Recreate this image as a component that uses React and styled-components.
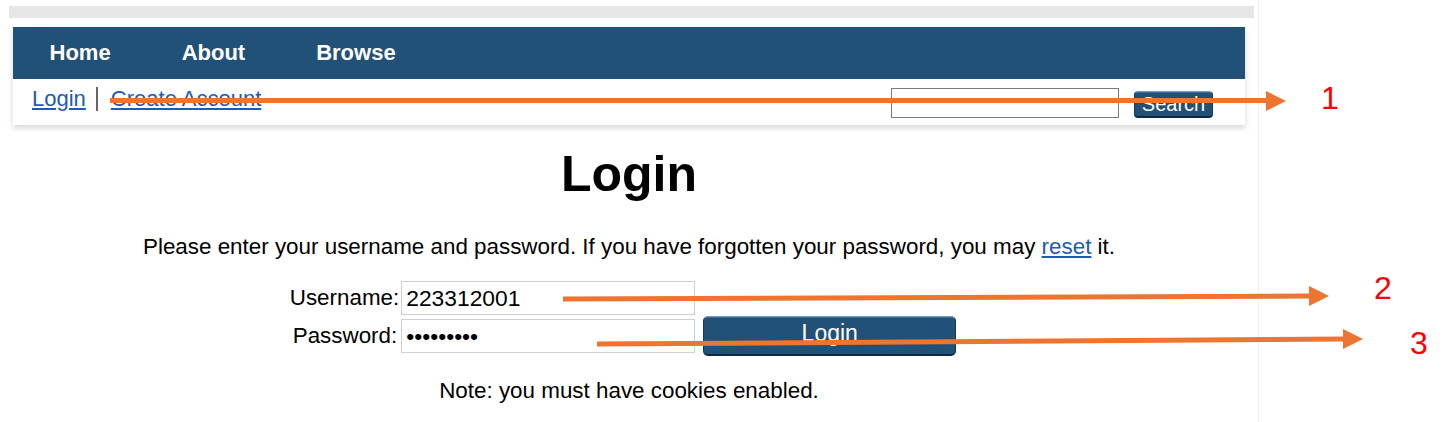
import React from "react";
import styled, { createGlobalStyle } from "styled-components";

const Global = createGlobalStyle`
  html, body { margin: 0; padding: 0; background: #fff; }
  body { font-family: "Liberation Sans", Arial, sans-serif; color: #000; }
`;

const Screen = styled.div`
  position: relative;
  width: 1450px;
  height: 422px;
  overflow: hidden;
  display: flex;
  background: #fff;
`;

const Page = styled.div`
  width: 1258px;
  height: 100%;
  border-right: 1px solid #f1f1f1;
  background: #fff;
  display: flex;
  flex-direction: column;
`;

const TopStrip = styled.div`
  height: 12px;
  margin: 6px 4px 0 9px;
  background: #e6e6e6;
`;

const Header = styled.div`
  margin: 9px 13px 0 13px;
  box-shadow: 0 3px 6px rgba(0, 0, 0, 0.16);
`;

const NavBar = styled.nav`
  height: 52px;
  background: #225178;
  display: flex;
  align-items: center;
  padding-left: 1px;
`;

const NavItem = styled.a`
  color: #fff;
  font-weight: bold;
  font-size: 22px;
  padding: 0 35.5px;
  text-decoration: none;
`;

const SubNav = styled.div`
  height: 46px;
  background: #fff;
  display: flex;
  align-items: flex-start;
  padding: 0 32px 0 19px;
`;

const SubLink = styled.a`
  color: #1c5cb5;
  font-size: 22px;
  text-decoration: underline;
  text-underline-offset: 2px;
  line-height: 24px;
  margin-top: 8px;
  padding-right: ${(p) => (p.$sep ? "10px" : "0")};
  border-right: ${(p) => (p.$sep ? "2px solid #666" : "none")};
  padding-left: ${(p) => (p.$after ? "13px" : "0")};
`;

const Spacer = styled.div`
  flex: 1;
`;

const SearchInput = styled.input`
  width: 228px;
  height: 30px;
  box-sizing: border-box;
  border: 1px solid #7a7a7a;
  margin: 9px 15px 0 0;
  padding: 0 4px;
  font-size: 18px;
  font-family: inherit;
`;

const BlueButton = styled.button`
  background: #225178;
  color: #fff;
  font-family: "Liberation Sans", Arial, sans-serif;
  font-size: ${(p) => (p.$small ? "20px" : "23px")};
  border: 1px solid #17395a;
  border-top-color: #6f9bc4;
  border-bottom: 2px solid #102a44;
  border-radius: ${(p) => (p.$small ? "4px" : "5px")};
  width: ${(p) => (p.$small ? "79px" : "253px")};
  height: ${(p) => (p.$small ? "27px" : "40px")};
  margin-top: ${(p) => (p.$small ? "12px" : "0")};
  padding: ${(p) => (p.$small ? "0" : "0 0 4px 0")};
  line-height: 1;
  box-shadow: inset 0 1px 0 rgba(255, 255, 255, 0.15);
`;

const Main = styled.main`
  display: flex;
  flex-direction: column;
  align-items: center;
`;

const Title = styled.h1`
  margin: 20px 0 0 0;
  font-size: 50px;
  line-height: 58px;
  font-weight: bold;
`;

const Intro = styled.p`
  margin: 31px 0 0 0;
  font-size: 22.4px;
  line-height: 26px;
`;

const InlineLink = styled.a`
  color: #1c5cb5;
  text-decoration: underline;
`;

const Form = styled.form`
  margin: 21px 0 0 0;
  display: grid;
  grid-template-columns: auto 294px auto;
  row-gap: 4px;
  align-items: start;
  padding-right: 12px;
`;

const Label = styled.label`
  font-size: 22.4px;
  line-height: 34px;
  text-align: right;
  padding-right: ${(p) => p.$pad || "2px"};
  grid-column: 1;
`;

const Field = styled.input`
  grid-column: 2;
  height: 34px;
  box-sizing: border-box;
  border: 1px solid #cfcfcf;
  padding: 0 4px;
  font-size: 22.8px;
  font-family: "Liberation Sans", Arial, sans-serif;
  color: #000;
  outline: none;
`;

const ButtonCell = styled.div`
  grid-column: 3;
  padding-left: 8px;
  display: flex;
  margin-top: -3px;
`;

const Note = styled.p`
  margin: 22px 0 0 0;
  font-size: 22.4px;
  line-height: 26px;
`;

const RightArea = styled.div`
  flex: 1;
  background: #fff;
`;

const Overlay = styled.svg`
  position: absolute;
  left: 0;
  top: 0;
  pointer-events: none;
`;

const arrows = [
  { x1: 110, y1: 100.5, x2: 1267, y2: 100.5, hx: 1266, hy: 101, tip: 1286, n: "1", nx: 1321, ny: 109 },
  { x1: 563, y1: 299, x2: 1311, y2: 296, hx: 1309, hy: 296, tip: 1329, n: "2", nx: 1374, ny: 299 },
  { x1: 597, y1: 344, x2: 1345, y2: 339, hx: 1343, hy: 339, tip: 1363, n: "3", nx: 1410, ny: 354 },
];

function Annotations() {
  return (
    <Overlay width="1450" height="422" viewBox="0 0 1450 422">
      {arrows.map((a) => (
        <g key={a.n}>
          <line x1={a.x1} y1={a.y1} x2={a.x2} y2={a.y2} stroke="#ED7431" strokeWidth="5" />
          <polygon
            points={`${a.hx},${a.hy - 10} ${a.tip},${a.hy} ${a.hx},${a.hy + 10}`}
            fill="#ED7431"
          />
          <text
            x={a.nx}
            y={a.ny}
            fill="#FF0000"
            fontSize="32"
            fontFamily="Liberation Sans, Arial, sans-serif"
          >
            {a.n}
          </text>
        </g>
      ))}
    </Overlay>
  );
}

export default function App() {
  return (
    <>
      <Global />
      <Screen>
        <Page>
          <TopStrip />
          <Header>
            <NavBar>
              <NavItem href="#">Home</NavItem>
              <NavItem href="#">About</NavItem>
              <NavItem href="#">Browse</NavItem>
            </NavBar>
            <SubNav>
              <SubLink href="#" $sep>Login</SubLink>
              <SubLink href="#" $after>Create Account</SubLink>
              <Spacer />
              <SearchInput type="text" />
              <BlueButton type="button" $small>Search</BlueButton>
            </SubNav>
          </Header>
          <Main>
            <Title>Login</Title>
            <Intro>
              Please enter your username and password. If you have forgotten your password, you may{" "}
              <InlineLink href="#">reset</InlineLink> it.
            </Intro>
            <Form onSubmit={(e) => e.preventDefault()}>
              <Label>Username:</Label>
              <Field type="text" defaultValue="223312001" />
              <div />
              <Label $pad="4px">Password:</Label>
              <Field type="password" defaultValue="123456789" />
              <ButtonCell>
                <BlueButton type="submit">Login</BlueButton>
              </ButtonCell>
            </Form>
            <Note>Note: you must have cookies enabled.</Note>
          </Main>
        </Page>
        <RightArea />
        <Annotations />
      </Screen>
    </>
  );
}
